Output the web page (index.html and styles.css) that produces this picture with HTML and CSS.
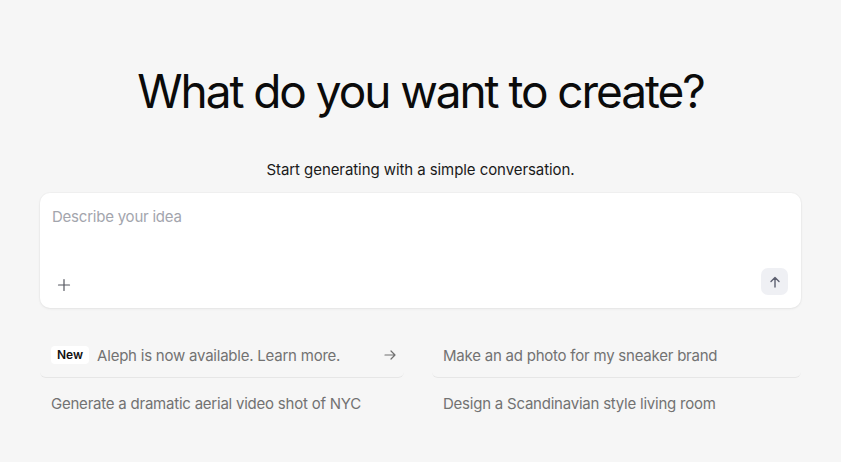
FILE: index.html
```html
<!DOCTYPE html>
<html>
<head>
<meta charset="utf-8">
<link rel="stylesheet" href="styles.css">
</head>
<body>
<main class="page">
  <h1 class="title">What do you want to create?</h1>
  <p class="subtitle">Start generating with a simple conversation.</p>
  <div class="composer">
    <div class="placeholder">Describe your idea</div>
    <div class="composer-bar">
      <button class="plus" aria-label="Add">
        <svg width="14" height="14" viewBox="0 0 14 14"><path d="M7 1.5v11M1.5 7h11" stroke="#55575f" stroke-width="1.2" stroke-linecap="round"/></svg>
      </button>
      <button class="send" aria-label="Send">
        <svg width="14" height="14" viewBox="0 0 14 14"><path d="M7 12V2.5M3 6.5L7 2.5l4 4" fill="none" stroke="#5d6070" stroke-width="1.4" stroke-linecap="round" stroke-linejoin="round"/></svg>
      </button>
    </div>
  </div>
  <div class="suggestions">
    <div class="item">
      <span class="badge">New</span>
      <span class="text">Aleph is now available. Learn more.</span>
      <svg class="arrow" width="14" height="14" viewBox="0 0 14 14"><path d="M2 7h10M8 3l4 4-4 4" fill="none" stroke="#707070" stroke-width="1.2" stroke-linecap="round" stroke-linejoin="round"/></svg>
    </div>
    <div class="item"><span class="text">Make an ad photo for my sneaker brand</span></div>
    <div class="item last"><span class="text">Generate a dramatic aerial video shot of NYC</span></div>
    <div class="item last"><span class="text">Design a Scandinavian style living room</span></div>
  </div>
</main>
</body>
</html>
```
FILE: styles.css
```css
* { box-sizing: border-box; }
html, body { margin: 0; padding: 0; }
body {
  background: #f6f6f6;
  font-family: Inter, "Noto Sans", sans-serif;
  color: #111;
}
.page {
  width: 761px;
  margin: 0 auto;
  padding-top: 61px;
}
.title {
  margin: 0;
  text-align: center;
  font-size: 46px;
  font-weight: 400;
  letter-spacing: -0.045em;
  line-height: 60px;
  color: #0b0b0b;
}
.subtitle {
  margin: 39px 0 0;
  text-align: center;
  font-size: 15px;
  line-height: 20px;
  color: #1a1a1a;
  letter-spacing: -0.005em;
}
.composer {
  margin-top: 13px;
  background: #fff;
  border-radius: 10px;
  height: 115px;
  box-shadow: 0 1px 3px rgba(0,0,0,0.06), 0 0 0 1px rgba(0,0,0,0.02);
  padding: 14px 13px 13px 12px;
  display: flex;
  flex-direction: column;
  justify-content: space-between;
}
.placeholder {
  font-size: 15px;
  line-height: 20px;
  color: #a3a5ad;
  letter-spacing: -0.015em;
}
.composer-bar {
  display: flex;
  justify-content: space-between;
  align-items: flex-end;
}
.plus, .send {
  border: 0;
  padding: 0;
  display: flex;
  align-items: center;
  justify-content: center;
}
.plus {
  background: transparent;
  width: 26px;
  height: 20px;
  margin-left: -1px;
}
.send {
  width: 27px;
  height: 27px;
  border-radius: 7px;
  background: #eff0f4;
}
.suggestions {
  margin-top: 25px;
  display: grid;
  grid-template-columns: 364px 369px;
  column-gap: 28px;
}
.item {
  display: flex;
  align-items: center;
  height: 45px;
  padding: 0 7px 0 11px;
  border-bottom: 1px solid #e6e6e6;
  border-radius: 0 0 6px 6px;
}
.item.last { border-bottom: 0; height: 50px; }
.badge {
  background: #fff;
  border-radius: 4px;
  font-size: 12px;
  font-weight: 600;
  line-height: 16px;
  padding: 1px 6px;
  margin-right: 8px;
  color: #111;
}
.text {
  font-size: 15px;
  color: #727272;
  letter-spacing: -0.015em;
  flex: 1;
}
```
